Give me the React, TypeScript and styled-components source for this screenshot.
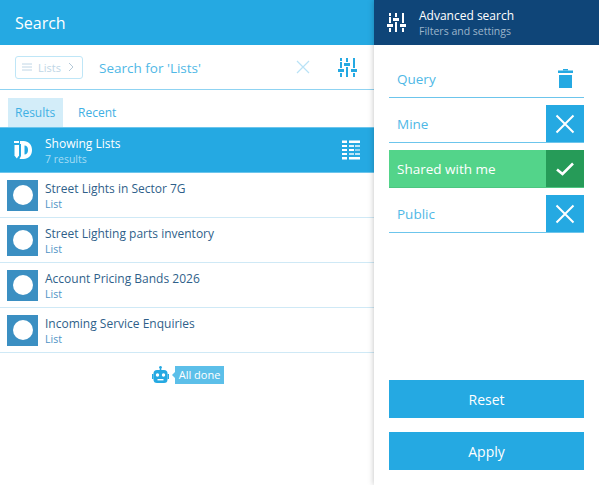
import styled, { createGlobalStyle } from "styled-components";

const GlobalStyle = createGlobalStyle`
  html, body {
    margin: 0;
    padding: 0;
    height: 100%;
    background: #fff;
    overflow: hidden;
  }
  * {
    box-sizing: border-box;
  }
`;

const Page = styled.div`
  display: flex;
  width: 599px;
  height: 485px;
  font-family: "Open Sans", "Noto Sans", sans-serif;
  overflow: hidden;
`;

const Main = styled.div`
  width: 374px;
  flex: none;
  display: flex;
  flex-direction: column;
`;

const TopBar = styled.div`
  height: 45px;
  flex: none;
  background: #25a9e2;
  color: #fff;
  font-size: 16px;
  line-height: 47px;
  padding-left: 15px;
`;

const SearchRow = styled.div`
  height: 45px;
  flex: none;
  display: flex;
  align-items: center;
  padding: 0 17px 0 15px;
  border-bottom: 1px solid #8fd3f2;
`;

const TypeChip = styled.div`
  width: 68px;
  height: 23px;
  display: flex;
  align-items: center;
  padding-left: 6px;
  gap: 6px;
  border: 1px solid #bfe6f7;
  border-radius: 3px;
  font-size: 11px;
  color: #c0d6e6;
  svg {
    flex: none;
  }
`;

const ChipLabel = styled.span`
  flex: 1;
`;

const SearchText = styled.div`
  flex: 1;
  margin-left: 16px;
  padding-top: 1px;
  font-size: 13.5px;
  color: #4fb8e6;
`;

const ClearIcon = styled.svg`
  width: 14px;
  height: 14px;
  margin-right: 28px;
`;

const Tabs = styled.div`
  height: 37px;
  flex: none;
  display: flex;
  align-items: flex-end;
  padding-left: 8px;
`;

const Tab = styled.div<{ $active?: boolean }>`
  height: 29px;
  line-height: 29px;
  padding: 0 7px 0 7px;
  width: ${(p) => (p.$active ? "55px" : "auto")};
  margin-right: ${(p) => (p.$active ? "8px" : "0")};
  font-size: 12px;
  color: #3fb0e4;
  background: ${(p) => (p.$active ? "#d3edf9" : "transparent")};
`;

const Banner = styled.div`
  height: 46px;
  flex: none;
  display: flex;
  align-items: center;
  background: #25a9e2;
  padding: 0 14px 0 14px;
  border-top: 1px solid #6cc5ec;
  border-bottom: 1px solid #6cc5ec;
  color: #fff;
`;

const BannerText = styled.div`
  flex: 1;
  margin-left: 13px;
`;

const BannerTitle = styled.div`
  font-size: 12px;
  line-height: 17px;
`;

const BannerSub = styled.div`
  font-size: 10.5px;
  line-height: 14px;
  color: #a5dcf4;
`;

const Row = styled.div`
  height: 45px;
  flex: none;
  display: flex;
  align-items: center;
  padding-left: 7px;
  border-bottom: 1px solid #cfe9f6;
`;

const Thumb = styled.div`
  width: 31px;
  height: 31px;
  flex: none;
  display: flex;
  align-items: center;
  justify-content: center;
  background: #3b8fc2;
`;

const ThumbDot = styled.div`
  width: 20px;
  height: 20px;
  border-radius: 50%;
  background: #fff;
`;

const RowText = styled.div`
  margin-left: 7px;
`;

const RowTitle = styled.div`
  font-size: 12px;
  line-height: 17px;
  color: #2f5f8a;
`;

const RowSub = styled.div`
  font-size: 10.5px;
  line-height: 14px;
  color: #4e93c6;
`;

const Done = styled.div`
  display: flex;
  align-items: center;
  justify-content: center;
  margin-top: 13px;
  padding-left: 2px;
  gap: 6px;
`;

const DoneTag = styled.div`
  position: relative;
  width: 49px;
  height: 18px;
  line-height: 18px;
  text-align: center;
  font-size: 11px;
  color: #fff;
  background: #5cbfe9;
  &::before {
    content: "";
    position: absolute;
    left: -3px;
    top: 6px;
    border-top: 3px solid transparent;
    border-bottom: 3px solid transparent;
    border-right: 3px solid #5cbfe9;
  }
`;

const Side = styled.div`
  flex: 1;
  display: flex;
  flex-direction: column;
  box-shadow: 0 0 6px rgba(0, 0, 0, 0.25);
  background: #fff;
  position: relative;
`;

const SideHead = styled.div`
  height: 45px;
  flex: none;
  display: flex;
  align-items: center;
  padding-left: 13px;
  background: #0f4578;
  color: #fff;
`;

const SideHeadText = styled.div`
  margin-left: 13px;
`;

const SideTitle = styled.div`
  font-size: 12px;
  line-height: 17px;
`;

const SideSub = styled.div`
  font-size: 10.5px;
  line-height: 14px;
  color: #9db5cb;
`;

const Filters = styled.div`
  flex: 1;
  display: flex;
  flex-direction: column;
  gap: 7px;
  padding: 15px;
`;

const Filter = styled.div<{ $on?: boolean }>`
  height: 38px;
  flex: none;
  display: flex;
  align-items: center;
  padding-left: 8px;
  font-size: 13.5px;
  color: ${(p) => (p.$on ? "#fff" : "#4fb8e6")};
  background: ${(p) => (p.$on ? "#53d48a" : "transparent")};
  border-bottom: 1px solid ${(p) => (p.$on ? "#4cc680" : "#6cc5ec")};
`;

const FilterLabel = styled.span`
  flex: 1;
  padding-top: 1px;
`;

const ToggleBox = styled.div<{ $on?: boolean }>`
  width: 38px;
  height: 37px;
  flex: none;
  display: flex;
  align-items: center;
  justify-content: center;
  background: ${(p) => (p.$on ? "#269b58" : "#25a9e2")};
`;

const TrashSlot = styled.div`
  width: 38px;
  display: flex;
  justify-content: center;
`;

const Action = styled.button`
  height: 38px;
  flex: none;
  border: 0;
  padding: 0;
  background: #25a9e2;
  color: #fff;
  font-family: inherit;
  font-size: 14px;
`;

const Actions = styled.div`
  margin-top: auto;
  display: flex;
  flex-direction: column;
  gap: 14px;
`;

function Sliders({ color, size }: { color: string; size: number }) {
  return (
    <svg width={size} height={size} viewBox="0 0 19 19" fill={color}>
      <rect x="2" y="0" width="2" height="3" />
      <rect x="2" y="4" width="2" height="6" />
      <rect x="0" y="11" width="6" height="3" />
      <rect x="2" y="15" width="2" height="4" />
      <rect x="8" y="0" width="2" height="4" />
      <rect x="6" y="5" width="6" height="3" />
      <rect x="8" y="9" width="2" height="10" />
      <rect x="15" y="0" width="2" height="10" />
      <rect x="13" y="11" width="6" height="3" />
      <rect x="15" y="15" width="2" height="4" />
    </svg>
  );
}

function Cross() {
  return (
    <svg width="20" height="20" viewBox="0 0 20 20" stroke="#fff" strokeWidth="2" fill="none">
      <path d="M1.5 1.5 L18.5 18.5 M18.5 1.5 L1.5 18.5" />
    </svg>
  );
}

function Logo() {
  return (
    <svg width="18" height="20" viewBox="0 0 18 20" fill="#fff">
      <path d="M0 1 H5 V3 H0 Z" />
      <path d="M0.5 5 H5 V15.5 L2.8 18.5 L0.5 15.5 Z" />
      <path
        fillRule="evenodd"
        d="M6 1 H9.5 C14.5 1 18 4.5 18 10 C18 15.5 14.5 19 9.5 19 H5.5 L7 16 V4 H6 Z M10.5 5.5 V14.5 C12.8 14.5 14 12.8 14 10 C14 7.2 12.8 5.5 10.5 5.5 Z"
      />
    </svg>
  );
}

function ListGrid() {
  return (
    <svg width="18" height="20" viewBox="0 0 18 20" fill="#fff">
      <rect x="0" y="0.5" width="5" height="2.5" />
      <rect x="7" y="0.5" width="11" height="2.5" />
      <rect x="0" y="5" width="5" height="2" />
      <rect x="7" y="5" width="5" height="2" opacity="0.85" />
      <rect x="13" y="5" width="5" height="2" opacity="0.7" />
      <rect x="0" y="9" width="5" height="2" />
      <rect x="7" y="9" width="5" height="2" />
      <rect x="13" y="9" width="5" height="2" opacity="0.5" />
      <rect x="0" y="13" width="5" height="2" />
      <rect x="7" y="13" width="5" height="2" opacity="0.7" />
      <rect x="13" y="13" width="5" height="2" opacity="0.7" />
      <rect x="0" y="17" width="5" height="2.5" />
      <rect x="7" y="17" width="11" height="2.5" />
    </svg>
  );
}

function Robot() {
  return (
    <svg width="17" height="18" viewBox="0 0 17 18">
      <circle cx="8.5" cy="1.3" r="1.3" fill="#25a9e2" />
      <rect x="7.7" y="1.5" width="1.6" height="3" fill="#25a9e2" />
      <rect x="1.5" y="4" width="14" height="13" rx="3.5" fill="#25a9e2" />
      <rect x="0" y="8" width="1.5" height="5" fill="#25a9e2" />
      <rect x="15.5" y="8" width="1.5" height="5" fill="#25a9e2" />
      <circle cx="5.5" cy="9" r="1.7" fill="#fff" />
      <circle cx="11.5" cy="9" r="1.7" fill="#fff" />
      <rect x="5.5" y="13" width="6" height="1.4" fill="#fff" />
    </svg>
  );
}

const results = [
  "Street Lights in Sector 7G",
  "Street Lighting parts inventory",
  "Account Pricing Bands 2026",
  "Incoming Service Enquiries",
];

const filters = [
  { name: "Mine", on: false },
  { name: "Shared with me", on: true },
  { name: "Public", on: false },
];

export default function App() {
  return (
    <Page>
      <GlobalStyle />
      <Main>
        <TopBar>Search</TopBar>
        <SearchRow>
          <TypeChip>
            <svg width="10" height="8" viewBox="0 0 10 8" stroke="#c0d6e6" fill="none">
              <path d="M0 1 H10 M0 4 H10 M0 7 H10" />
            </svg>
            <ChipLabel>Lists</ChipLabel>
            <svg width="6" height="10" viewBox="0 0 6 10" stroke="#b5c9d8" fill="none" style={{ marginRight: 8 }}>
              <path d="M1 1 L5 5 L1 9" />
            </svg>
          </TypeChip>
          <SearchText>Search for 'Lists'</SearchText>
          <ClearIcon viewBox="0 0 14 14" stroke="#b9e2f6" strokeWidth="1.2" fill="none">
            <path d="M1 1 L13 13 M13 1 L1 13" />
          </ClearIcon>
          <Sliders color="#25a9e2" size={19} />
        </SearchRow>
        <Tabs>
          <Tab $active>Results</Tab>
          <Tab>Recent</Tab>
        </Tabs>
        <Banner>
          <Logo />
          <BannerText>
            <BannerTitle>Showing Lists</BannerTitle>
            <BannerSub>7 results</BannerSub>
          </BannerText>
          <ListGrid />
        </Banner>
        {results.map((r) => (
          <Row key={r}>
            <Thumb>
              <ThumbDot />
            </Thumb>
            <RowText>
              <RowTitle>{r}</RowTitle>
              <RowSub>List</RowSub>
            </RowText>
          </Row>
        ))}
        <Done>
          <Robot />
          <DoneTag>All done</DoneTag>
        </Done>
      </Main>
      <Side>
        <SideHead>
          <Sliders color="#fff" size={19} />
          <SideHeadText>
            <SideTitle>Advanced search</SideTitle>
            <SideSub>Filters and settings</SideSub>
          </SideHeadText>
        </SideHead>
        <Filters>
          <Filter>
            <FilterLabel>Query</FilterLabel>
            <TrashSlot>
              <svg width="15" height="19" viewBox="0 0 15 19" fill="#25a9e2">
                <rect x="5" y="0" width="5" height="1.5" />
                <rect x="0" y="1.5" width="15" height="2.5" />
                <rect x="1" y="6" width="13" height="13" />
              </svg>
            </TrashSlot>
          </Filter>
          {filters.map((f) => (
            <Filter key={f.name} $on={f.on}>
              <FilterLabel>{f.name}</FilterLabel>
              <ToggleBox $on={f.on}>
                {f.on ? (
                  <svg width="18" height="14" viewBox="0 0 18 14" stroke="#fff" strokeWidth="2.6" fill="none">
                    <path d="M1 7.5 L6.5 12 L17 1.5" />
                  </svg>
                ) : (
                  <Cross />
                )}
              </ToggleBox>
            </Filter>
          ))}
          <Actions>
            <Action>Reset</Action>
            <Action>Apply</Action>
          </Actions>
        </Filters>
      </Side>
    </Page>
  );
}
